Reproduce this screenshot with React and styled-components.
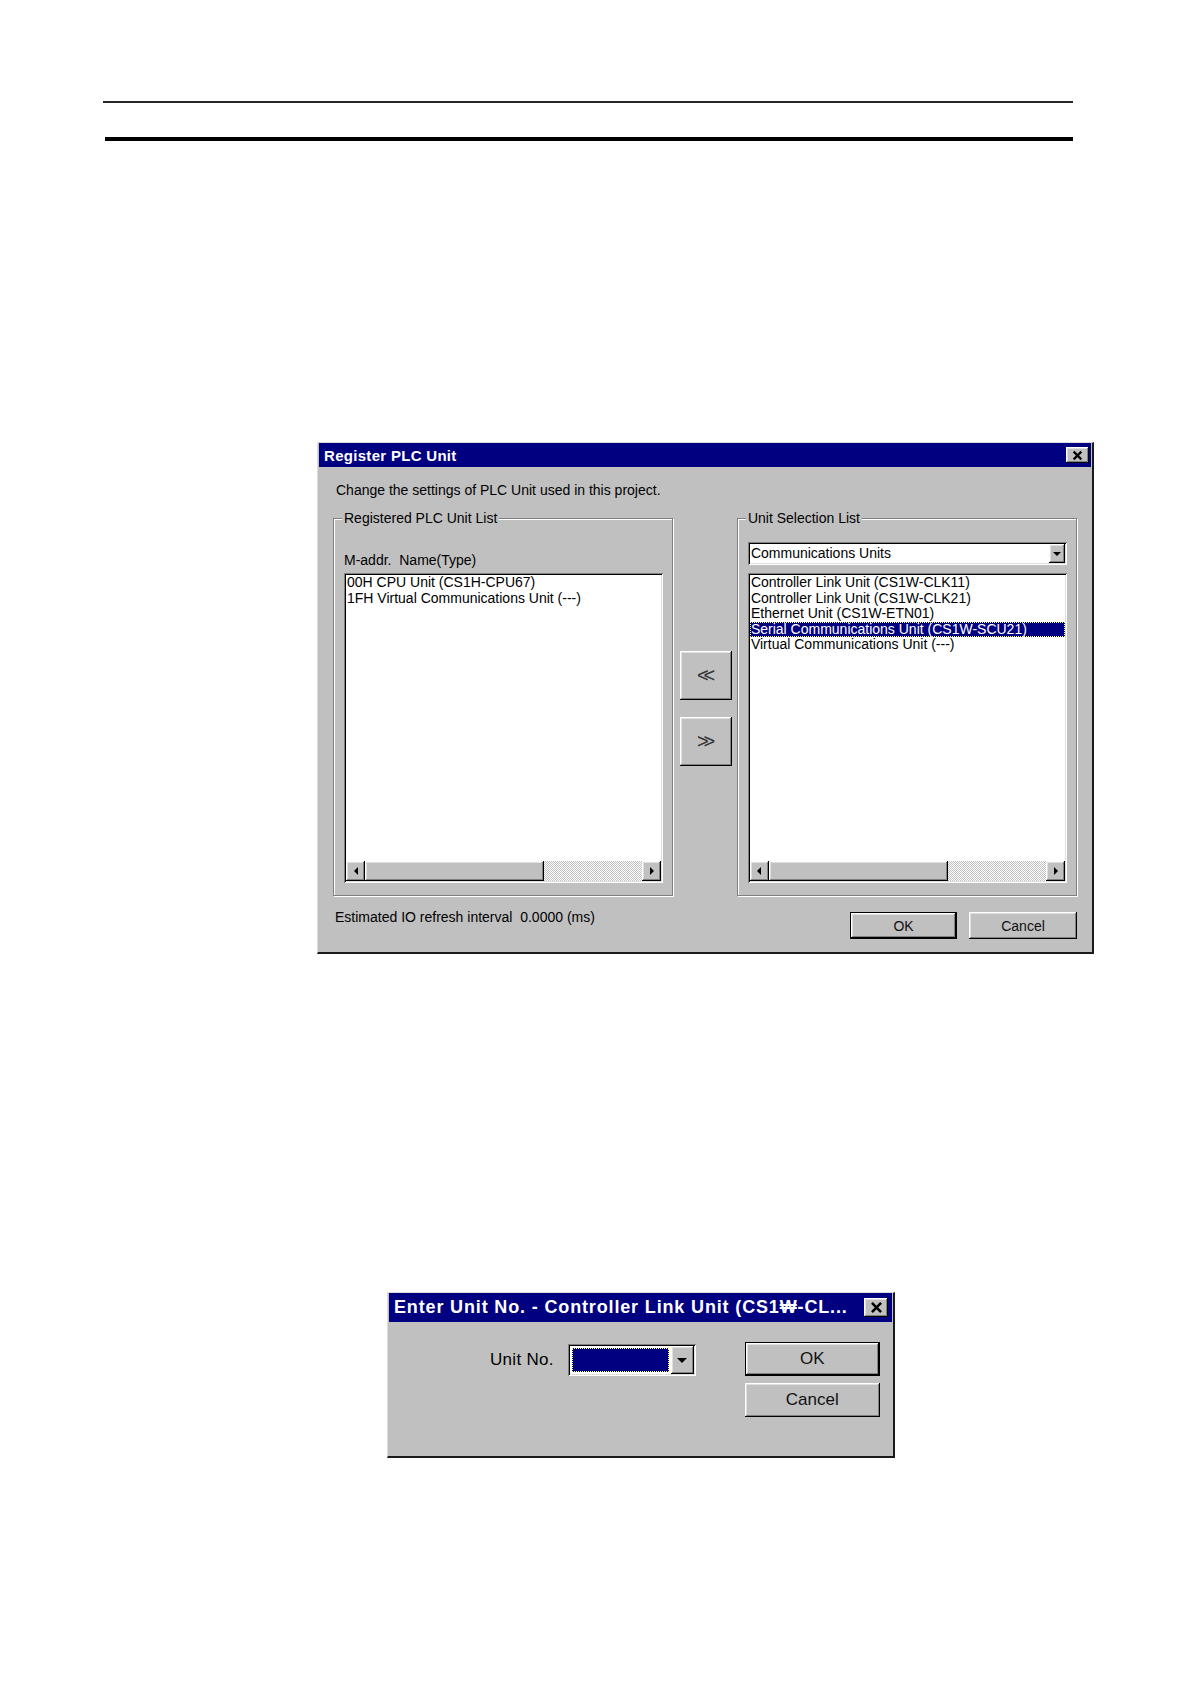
import React from 'react'
import styled, { createGlobalStyle } from 'styled-components'

const GlobalStyle = createGlobalStyle`
    body{
        margin: 0;
        background: #ffffff;
        font-family: "Liberation Sans", Arial, sans-serif;
        color: #000;
    }
`

const raised = `
    box-shadow: inset -1px -1px #000, inset 1px 1px #fff, inset -2px -2px #808080, inset 2px 2px #dfdfdf;
`
const sunken = `
    box-shadow: inset 1px 1px #808080, inset -1px -1px #fff, inset 2px 2px #000, inset -2px -2px #dfdfdf;
`

const Page = styled.div`
    width: 1190px;
    min-height: 1684px;
    padding-top: 101px;
    box-sizing: border-box;
    overflow: hidden;
`
const ThinRule = styled.div`
    margin-left: 103px;
    width: 970px;
    height: 2px;
    background: #262626;
`
const ThickRule = styled.div`
    margin: 34px 0 0 105px;
    width: 968px;
    height: 4px;
    background: #000;
`

const Window = styled.div`
    box-sizing: border-box;
    width: ${p => p.$w}px;
    margin: ${p => p.$top}px 0 0 ${p => p.$left}px;
    background: #c0c0c0;
    border-top: 1px solid #dcdcdc;
    border-left: 1px solid #dcdcdc;
    border-right: 2px solid #1a1a1a;
    border-bottom: 2px solid #1a1a1a;
    padding: 0 1px;
`
const TitleBar = styled.div`
    height: ${p => p.$h}px;
    background: #000080;
    color: #fff;
    font-weight: bold;
    font-size: ${p => p.$fs}px;
    letter-spacing: ${p => p.$ls}px;
    display: flex;
    align-items: center;
    justify-content: space-between;
    padding: 0 ${p => p.$pr}px 0 5px;
    white-space: nowrap;
`
const CloseBtn = styled.div`
    width: ${p => p.$w}px;
    height: ${p => p.$h}px;
    background: #c0c0c0;
    ${raised}
    display: flex;
    align-items: center;
    justify-content: center;
`

const Body1 = styled.div`
    padding: 15px 14px 13px 14px;
`
const Text = styled.div`
    font-size: ${p => p.$fs || 14}px;
    line-height: 16px;
    margin-left: ${p => p.$ml || 0}px;
    letter-spacing: ${p => p.$ls || 0}px;
    white-space: nowrap;
`
const GroupRow = styled.div`
    display: flex;
    align-items: flex-start;
    margin-top: 12px;
`
const Group = styled.fieldset`
    width: 341px;
    box-sizing: border-box;
    margin: 0;
    padding: ${p => p.$pt}px 9px 12px 10px;
    border: 1px solid #808080;
    box-shadow: inset 1px 1px #fff, 1px 1px #fff;
    min-width: 0;
`
const Legend = styled.legend`
    font-size: 14px;
    line-height: 16px;
    padding: 0 2px;
    margin-left: -2px;
    background: #c0c0c0;
`
const MoveColumn = styled.div`
    width: 64px;
    box-sizing: border-box;
    padding: 141px 0 0 7px;
    display: flex;
    flex-direction: column;
    gap: 17px;
`
const MoveButton = styled.div`
    width: 52px;
    height: 49px;
    background: #c0c0c0;
    ${raised}
    display: flex;
    align-items: center;
    justify-content: center;
    font-size: 20px;
    letter-spacing: -5px;
    padding-right: 5px;
    box-sizing: border-box;
    color: #333;
`

const ListBox = styled.div`
    margin-top: ${p => p.$mt}px;
    height: 310px;
    background: #fff;
    ${sunken}
    padding: 2px;
    box-sizing: border-box;
    display: flex;
    flex-direction: column;
`
const Items = styled.div`
    flex: 1;
`
const Item = styled.div`
    font-size: 14px;
    line-height: 15.5px;
    height: 15.5px;
    white-space: nowrap;
    padding-left: 1px;
    background: ${p => (p.$sel ? '#000080' : 'transparent')};
    color: ${p => (p.$sel ? '#fff' : '#000')};
    outline: ${p => (p.$sel ? '1px dotted #ffff60' : 'none')};
    outline-offset: -1px;
`
const ScrollBar = styled.div`
    height: 20px;
    display: flex;
`
const ScrollArrow = styled.div`
    width: ${p => p.$w}px;
    background: #c0c0c0;
    ${raised}
    display: flex;
    align-items: center;
    justify-content: center;
`
const Tri = styled.span`
    width: 0;
    height: 0;
    border-top: 4px solid transparent;
    border-bottom: 4px solid transparent;
    border-left: ${p => (p.$dir === 'right' ? '4px solid #000' : '0')};
    border-right: ${p => (p.$dir === 'left' ? '4px solid #000' : '0')};
`
const DownTri = styled.span`
    width: 0;
    height: 0;
    border-left: ${p => p.$s}px solid transparent;
    border-right: ${p => p.$s}px solid transparent;
    border-top: ${p => p.$s}px solid #000;
`
const Thumb = styled.div`
    width: ${p => p.$w}px;
    background: #c0c0c0;
    ${raised}
`
const Track = styled.div`
    flex: 1;
    background: repeating-conic-gradient(#c0c0c0 0 25%, #ffffff 0 50%) 0 0 / 2px 2px;
`

const Combo = styled.div`
    height: ${p => p.$h}px;
    width: ${p => (p.$w ? `${p.$w}px` : 'auto')};
    background: #fff;
    ${sunken}
    padding: 2px;
    box-sizing: border-box;
    display: flex;
`
const ComboText = styled.div`
    flex: 1;
    font-size: 14px;
    line-height: 19px;
    padding-left: 1px;
`
const ComboSel = styled.div`
    flex: 1;
    margin: 2px;
    background: #000080;
    outline: 1px dotted #ffff60;
    outline-offset: -1px;
`
const ComboBtn = styled.div`
    width: ${p => p.$w}px;
    background: #c0c0c0;
    ${raised}
    display: flex;
    align-items: center;
    justify-content: center;
`

const BottomRow = styled.div`
    display: flex;
    align-items: flex-start;
    margin-top: 13px;
`
const Spacer = styled.div`
    flex: 1;
`
const Button = styled.div`
    width: ${p => p.$w}px;
    height: ${p => p.$h}px;
    margin-top: ${p => p.$mt || 0}px;
    margin-left: ${p => p.$ml || 0}px;
    box-sizing: border-box;
    background: #c0c0c0;
    border: ${p => (p.$default ? '1px solid #000' : '0')};
    ${raised}
    display: flex;
    align-items: center;
    justify-content: center;
    font-size: ${p => p.$fs}px;
    color: #111;
`

const Body2 = styled.div`
    padding: 20px 13px 39px 101px;
    display: flex;
    align-items: flex-start;
`
const UnitField = styled.div`
    display: flex;
    align-items: center;
    gap: 14px;
    margin-top: 2px;
`
const ButtonColumn = styled.div`
    margin-left: 49px;
    display: flex;
    flex-direction: column;
    gap: 7px;
`

const CloseIcon = ({ size }) => (
    <svg width={size} height={size} viewBox="0 0 10 10">
        <path d="M1.5 1.5 L8.5 8.5 M8.5 1.5 L1.5 8.5" stroke="#000" strokeWidth="2" />
    </svg>
)

const List = ({ items, selected, mt }) => (
    <ListBox $mt={mt}>
        <Items>
            {items.map(t => (
                <Item key={t} $sel={t === selected}>{t}</Item>
            ))}
        </Items>
        <ScrollBar>
            <ScrollArrow $w={19}><Tri $dir="left" /></ScrollArrow>
            <Thumb $w={179} />
            <Track />
            <ScrollArrow $w={19}><Tri $dir="right" /></ScrollArrow>
        </ScrollBar>
    </ListBox>
)

const registered = ['00H CPU Unit (CS1H-CPU67)', '1FH Virtual Communications Unit (---)']
const selection = [
    'Controller Link Unit (CS1W-CLK11)',
    'Controller Link Unit (CS1W-CLK21)',
    'Ethernet Unit (CS1W-ETN01)',
    'Serial Communications Unit (CS1W-SCU21)',
    'Virtual Communications Unit (---)',
]

const App = () => {
    return (
        <Page>
            <GlobalStyle />
            <ThinRule />
            <ThickRule />

            <Window $w={777} $top={301} $left={317}>
                <TitleBar $h={24} $fs={15} $ls={0.3} $pr={2}>
                    <span>Register PLC Unit</span>
                    <CloseBtn $w={23} $h={16}><CloseIcon size={11} /></CloseBtn>
                </TitleBar>
                <Body1>
                    <Text $ml={3}>Change the settings of PLC Unit used in this project.</Text>
                    <GroupRow>
                        <Group $pt={26}>
                            <Legend>Registered PLC Unit List</Legend>
                            <Text>M-addr.&nbsp; Name(Type)</Text>
                            <List items={registered} mt={5} />
                        </Group>
                        <MoveColumn>
                            <MoveButton>&lt;&lt;</MoveButton>
                            <MoveButton>&gt;&gt;</MoveButton>
                        </MoveColumn>
                        <Group $pt={16}>
                            <Legend>Unit Selection List</Legend>
                            <Combo $h={23}>
                                <ComboText>Communications Units</ComboText>
                                <ComboBtn $w={16}><DownTri $s={4} /></ComboBtn>
                            </Combo>
                            <List items={selection} selected="Serial Communications Unit (CS1W-SCU21)" mt={8} />
                        </Group>
                    </GroupRow>
                    <BottomRow>
                        <Text $ml={2}>Estimated IO refresh interval&nbsp; 0.0000 (ms)</Text>
                        <Spacer />
                        <Button $w={107} $h={27} $mt={3} $fs={14} $default>OK</Button>
                        <Button $w={108} $h={27} $mt={3} $ml={12} $fs={14}>Cancel</Button>
                    </BottomRow>
                </Body1>
            </Window>

            <Window $w={508} $top={338} $left={387}>
                <TitleBar $h={29} $fs={18} $ls={0.85} $pr={4}>
                    <span>Enter Unit No. - Controller Link Unit (CS1₩-CL...</span>
                    <CloseBtn $w={24} $h={19}><CloseIcon size={13} /></CloseBtn>
                </TitleBar>
                <Body2>
                    <UnitField>
                        <Text $fs={17} $ls={0.3}>Unit No.</Text>
                        <Combo $h={32} $w={128}>
                            <ComboSel />
                            <ComboBtn $w={23}><DownTri $s={5} /></ComboBtn>
                        </Combo>
                    </UnitField>
                    <ButtonColumn>
                        <Button $w={135} $h={34} $fs={17} $default>OK</Button>
                        <Button $w={135} $h={34} $fs={17}>Cancel</Button>
                    </ButtonColumn>
                </Body2>
            </Window>
        </Page>
    )
}

export default App
